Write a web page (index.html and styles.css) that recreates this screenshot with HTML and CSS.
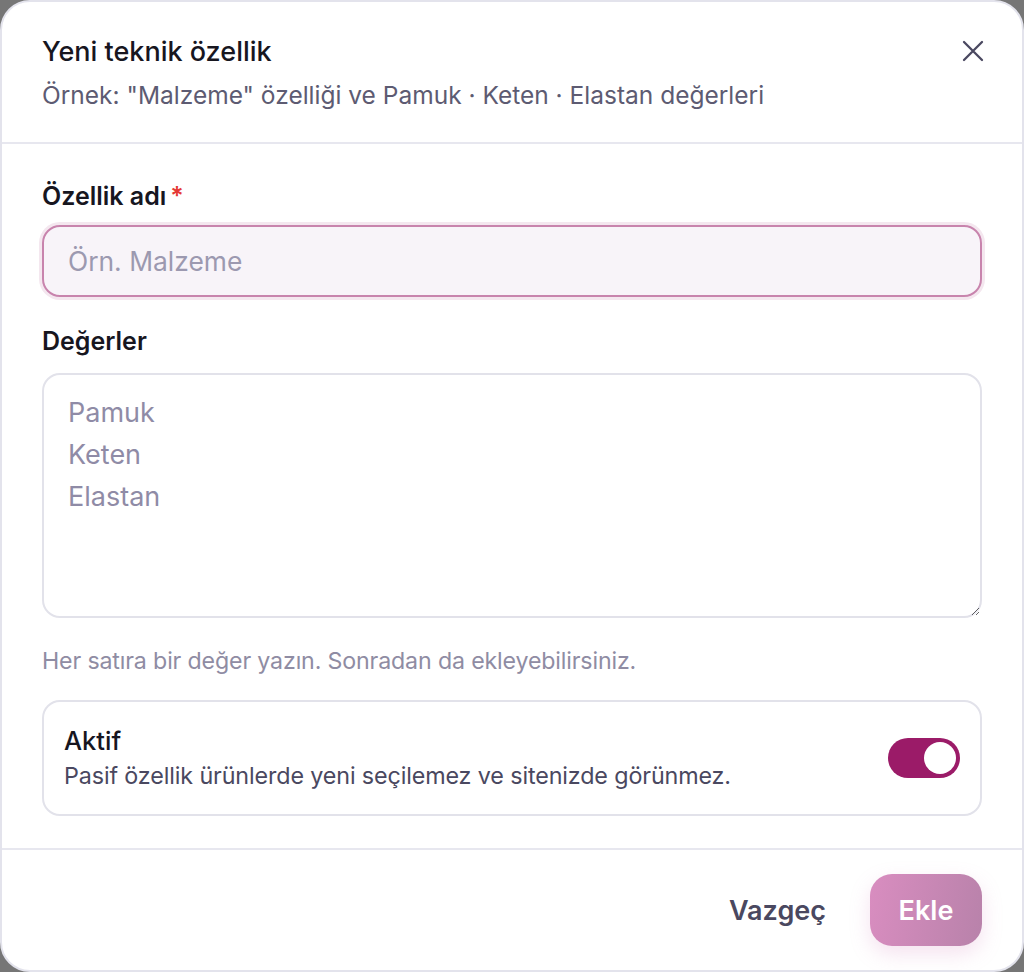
FILE: index.html
```html
<!DOCTYPE html>
<html lang="tr">
<head>
<meta charset="utf-8">
<title>Yeni teknik özellik</title>
<link rel="stylesheet" href="styles.css">
</head>
<body>
<div class="modal">
  <header class="modal-header">
    <div class="titles">
      <h1 class="title">Yeni teknik özellik</h1>
      <p class="subtitle">Örnek: "Malzeme" özelliği ve Pamuk · Keten · Elastan değerleri</p>
    </div>
    <button class="close" aria-label="Kapat">
      <svg width="24" height="24" viewBox="0 0 24 24" fill="none" stroke="currentColor" stroke-width="2.3" stroke-linecap="round"><path d="M3 3L21 21M21 3L3 21"/></svg>
    </button>
  </header>
  <main class="modal-body">
    <label class="label" for="name">Özellik adı<span class="req">*</span></label>
    <input id="name" class="input" type="text" placeholder="Örn. Malzeme">
    <label class="label label-values" for="values">Değerler</label>
    <textarea id="values" class="textarea" placeholder="Pamuk&#10;Keten&#10;Elastan"></textarea>
    <p class="help">Her satıra bir değer yazın. Sonradan da ekleyebilirsiniz.</p>
    <div class="toggle-card">
      <div class="toggle-text">
        <div class="toggle-title">Aktif</div>
        <div class="toggle-desc">Pasif özellik ürünlerde yeni seçilemez ve sitenizde görünmez.</div>
      </div>
      <span class="switch"><span class="knob"></span></span>
    </div>
  </main>
  <footer class="modal-footer">
    <button class="btn-ghost">Vazgeç</button>
    <button class="btn-primary">Ekle</button>
  </footer>
</div>
</body>
</html>
```
FILE: styles.css
```css
* { box-sizing: border-box; }
html, body { margin: 0; height: 100%; }
body {
  background: #767676;
  font-family: Inter, "Noto Sans", "DejaVu Sans", sans-serif;
  color: #1b1a24;
  overflow: hidden;
}
.modal {
  width: 1024px;
  height: 972px;
  background: #fff;
  border: 2px solid #e3e3ec;
  border-radius: 30px;
  display: flex;
  flex-direction: column;
  overflow: hidden;
}
.modal-header {
  display: flex;
  justify-content: space-between;
  align-items: flex-start;
  padding: 33px 37px 0 40px;
  height: 142px;
  border-bottom: 2px solid #e7e7ef;
  flex: none;
}
.title {
  margin: 0;
  font-size: 27px;
  font-weight: 500;
  line-height: 34px;
  color: #17161f;
}
.subtitle {
  margin: 12px 0 0;
  font-size: 24.5px;
  line-height: 28px;
  color: #5d5b72;
}
.close {
  background: none;
  border: 0;
  padding: 0;
  margin-top: 4px;
  color: #4a4860;
  width: 24px;
  height: 24px;
  cursor: pointer;
}
.modal-body {
  flex: 1;
  padding: 37px 40px 0 40px;
  display: flex;
  flex-direction: column;
}
.label {
  font-size: 25px;
  font-weight: 600;
  line-height: 30px;
  color: #17161f;
}
.req { color: #e53935; margin-left: 4px; }
.input {
  margin-top: 14px;
  height: 72px;
  border: 2px solid #c884ad;
  border-radius: 18px;
  background: #f8f4f9;
  box-shadow: 0 0 0 3px #f4e7ef;
  padding: 0 24px;
  font: inherit;
  font-size: 26.4px;
  color: #1b1a24;
  outline: none;
}
.input::placeholder { color: #9c99b0; }
.label-values { margin-top: 29px; }
.textarea {
  margin-top: 17px;
  height: 245px;
  border: 2px solid #e2e2ea;
  border-radius: 18px;
  background: #fff;
  padding: 17px 24px;
  font: inherit;
  font-size: 27px;
  line-height: 42px;
  color: #1b1a24;
  resize: vertical;
  outline: none;
}
.textarea::placeholder { color: #8f8ba6; }
.help {
  margin: 29px 0 0;
  font-size: 23.2px;
  line-height: 28px;
  color: #8f8ca3;
  letter-spacing: -0.15px;
}
.toggle-card {
  margin-top: 25px;
  height: 116px;
  border: 2px solid #e2e2ea;
  border-radius: 18px;
  display: flex;
  align-items: center;
  justify-content: space-between;
  padding: 0 20px 0 20px;
}
.toggle-title {
  font-size: 25.5px;
  font-weight: 500;
  line-height: 30px;
  color: #17161f;
}
.toggle-desc {
  margin-top: 6px;
  font-size: 23.3px;
  line-height: 28px;
  color: #4a4860;
  letter-spacing: -0.12px;
}
.switch {
  width: 72px;
  height: 40px;
  border-radius: 20px;
  background: #9b1b68;
  display: flex;
  align-items: center;
  justify-content: flex-end;
  padding: 0 4px;
  flex: none;
}
.knob {
  width: 32px;
  height: 32px;
  border-radius: 50%;
  background: #fff;
}
.modal-footer {
  flex: none;
  height: 122px;
  border-top: 2px solid #e7e7ef;
  display: flex;
  align-items: center;
  justify-content: flex-end;
  gap: 24px;
  padding: 0 40px 0;
}
.btn-ghost {
  background: none;
  border: 0;
  font: inherit;
  font-size: 27px;
  font-weight: 600;
  color: #4a4860;
  padding: 0 20px;
  height: 72px;
  cursor: pointer;
}
.btn-primary {
  width: 112px;
  height: 72px;
  border: 0;
  border-radius: 22px;
  background: linear-gradient(100deg, #d98dc0 0%, #b882aa 100%);
  color: #fff;
  font: inherit;
  font-size: 27px;
  font-weight: 600;
  box-shadow: 0 8px 20px rgba(217, 141, 192, 0.25);
  cursor: pointer;
}
```
